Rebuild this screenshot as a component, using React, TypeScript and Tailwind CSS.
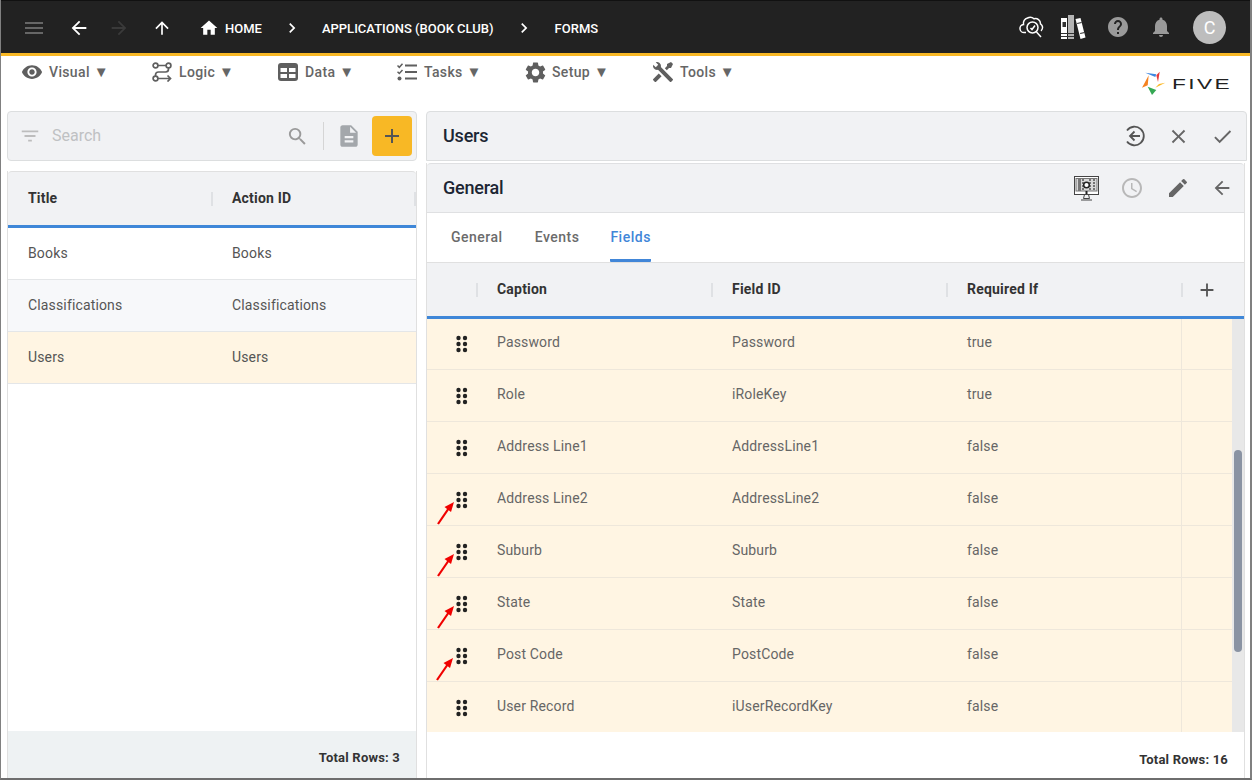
import React from "react";
import {
  MdMenu, MdArrowBack, MdArrowForward, MdArrowUpward, MdHome, MdChevronRight, MdHelp, MdNotifications,
  MdVisibility, MdSettings, MdFilterList, MdSearch, MdDescription, MdAdd, MdClose, MdCheck, MdEdit, MdAccessTime,
} from "react-icons/md";

const font = { fontFamily: "Roboto, sans-serif" };

function Arrow({ far }: { far?: boolean }) {
  return (
    <svg width="20" height="26" viewBox="0 0 20 26" className={"absolute top-[9px] " + (far ? "-left-[21px]" : "-left-[20px]")}>
      <line x1="2" y1="24" x2="13" y2="8" stroke="#f00000" strokeWidth="2.200" />
      <polygon points="18,2 8.500,7 15,12" fill="#f00000" />
    </svg>
  );
}

function Dots({ arrow, far }: { arrow?: boolean; far?: boolean }) {
  return (
    <span className="relative block w-[12px] h-[18px]">
      <svg width="12" height="18" viewBox="0 0 12 18" className="block">
        {[3, 9, 15].map((y) => (
          <g key={y}>
            <circle cx="2.5" cy={y} r="2.2" fill="#222" />
            <circle cx="9" cy={y} r="2.2" fill="#222" />
          </g>
        ))}
      </svg>
      {arrow && <Arrow far={far} />}
    </span>
  );
}

function LogicIcon() {
  return (
    <svg width="20" height="20" viewBox="0 0 20 20" fill="none" stroke="#5f5f5f" strokeWidth="1.7">
      <circle cx="3.5" cy="3.5" r="2.4" />
      <circle cx="16.5" cy="3.5" r="2.4" />
      <circle cx="3.5" cy="16.5" r="2.4" />
      <path d="M6 3.5h8M16.500 6v1q0 3-3 3H6.500q-3 0-3 3v1M6 16.500h12.500M15.500 13.500l3 3-3 3" />
    </svg>
  );
}

function DataIcon() {
  return (
    <svg width="20" height="18" viewBox="0 0 20 18">
      <rect x="0" y="0" width="20" height="18" rx="3" fill="#5f5f5f" />
      <rect x="2.500" y="5" width="6.500" height="4" fill="#fff" />
      <rect x="11" y="5" width="6.500" height="4" fill="#fff" />
      <rect x="2.500" y="11" width="6.500" height="4" fill="#fff" />
      <rect x="11" y="11" width="6.500" height="4" fill="#fff" />
    </svg>
  );
}

function TasksIcon() {
  return (
    <svg width="20" height="18" viewBox="0 0 20 18" fill="none" stroke="#5f5f5f">
      <path d="M0.500 2.500l1.800 1.800L5.500 0.800M0.500 8.700l1.800 1.800L5.500 7" strokeWidth="1.500" />
      <circle cx="2.500" cy="15.500" r="2" fill="#5f5f5f" stroke="none" />
      <path d="M8 2.500h12M8 9h12M8 15.500h12" strokeWidth="2.200" />
    </svg>
  );
}

function ToolsIcon() {
  return (
    <svg width="24" height="24" viewBox="0 0 24 24" fill="#5f5f5f">
      <path d="M21.71 20.29L20.29 21.71A1 1 0 0 1 18.88 21.71L7 9.85A3.81 3.81 0 0 1 6 10A4 4 0 0 1 2.22 4.7L4.76 7.24L5.29 6.71L6.71 5.29L7.24 4.76L4.7 2.22A4 4 0 0 1 10 6A3.81 3.81 0 0 1 9.85 7L21.71 18.88A1 1 0 0 1 21.71 20.29M2.29 18.88A1 1 0 0 0 2.29 20.29L3.71 21.71A1 1 0 0 0 5.12 21.71L10.59 16.25L7.76 13.42M20 2L16 4V6L13.83 8.17L15.83 10.17L18 8H20L22 4Z" />
    </svg>
  );
}

function CloudSearch() {
  return (
    <svg width="26" height="24" viewBox="0 0 26 24" fill="none" stroke="#fff" strokeWidth="1.500">
      <path d="M7 17.500H5.500a4 4 0 0 1-1-8 5.500 5.500 0 0 1 4-6.500 5.500 5.500 0 0 1 6.500 .8 5 5 0 0 1 6.500 5 4.300 4.300 0 0 1 .5 7" />
      <circle cx="13.500" cy="12.500" r="5.500" />
      <path d="M11.500 13l1.500 1.500 3-4M17.500 17l4.500 5" />
    </svg>
  );
}

function BooksIcon() {
  return (
    <svg width="26" height="26" viewBox="0 0 26 26" fill="#fff">
      <rect x="1" y="4" width="6" height="21" />
      <rect x="8" y="1" width="6" height="24" fill="#b4b4b4" />
      <path d="M15.500 5l5-1 5 19.500-5 1.500z" />
      <rect x="2.500" y="8" width="3.500" height="5" fill="#333" />
      <rect x="1" y="19" width="13" height="1" fill="#333" />
      <rect x="1" y="22" width="13" height="1" fill="#333" />
      <path d="M17 9l4.500-1 .3 1-4.500 1zM20 19l4.500-1 .3 1-4.500 1z" fill="#333" />
    </svg>
  );
}

function RevertIcon() {
  return (
    <svg width="22" height="22" viewBox="0 0 22 22" fill="none" stroke="#555" strokeWidth="1.800">
      <path d="M3 5.500A9.300 9.300 0 1 1 3 16.500" />
      <path d="M16 11H6.500M10.500 6.500L6 11l4.500 4.500" />
    </svg>
  );
}

function MonitorIcon() {
  return (
    <svg width="25" height="25" viewBox="0 0 25 25" fill="none" stroke="#444" strokeWidth="1">
      <rect x="0.500" y="0.500" width="24" height="18" fill="#fff" />
      <rect x="2" y="2.500" width="21" height="12.500" fill="#d8d8d8" stroke="#777" />
      <path d="M4 3h3v12H4z" fill="#777" stroke="none" />
      <path d="M9 3v12M16 3v12M20 3v12" stroke="#333" strokeWidth="1.200" strokeDasharray="2 1" />
      <circle cx="12.500" cy="9" r="2.800" fill="#fff" stroke="#222" strokeWidth="1.500" />
      <path d="M12.500 15v3" stroke="#222" strokeWidth="2" />
      <path d="M10.500 18.500l-1 4h6l-1-4M7 24h11" />
    </svg>
  );
}

function Logo() {
  return (
    <div className="flex items-center gap-[6px]">
      <svg width="24" height="25" viewBox="0 0 24 25" className="shrink-0">
        <polygon points="3.300,1.700 14.300,3.300 13.300,6" fill="#3f87e0" />
        <polygon points="17.700,0.700 14.300,4.300 16,11" fill="#e83a3a" />
        <polygon points="23.300,11.700 13.300,16.700 17,13" fill="#fbb726" />
        <polygon points="10,24 5.700,15.700 14.300,19" fill="#35a853" />
        <polygon points="6.700,4.300 0,16.700 5.700,14.300" fill="#f58220" />
      </svg>
      <span className="w-[58px] block text-[14px] leading-none tracking-[1.5px] text-[#222]" style={{ fontFamily: "'Liberation Sans', sans-serif", transform: "scaleX(1.62)", transformOrigin: "left" }}>FIVE</span>
    </div>
  );
}

const nav = [
  { label: "Visual", icon: <MdVisibility size={22} color="#5f5f5f" />, w: "w-[130px]" },
  { label: "Logic", icon: <LogicIcon />, w: "w-[126px]" },
  { label: "Data", icon: <DataIcon />, w: "w-[119px]" },
  { label: "Tasks", icon: <TasksIcon />, w: "w-[128px]" },
  { label: "Setup", icon: <MdSettings size={25} color="#5f5f5f" />, w: "w-[128px]" },
  { label: "Tools", icon: <ToolsIcon />, w: "w-[100px]" },
];

const fieldRows: [string, string, string, boolean][] = [
  ["Password", "Password", "true", false],
  ["Role", "iRoleKey", "true", false],
  ["Address Line1", "AddressLine1", "false", false],
  ["Address Line2", "AddressLine2", "false", true],
  ["Suburb", "Suburb", "false", true],
  ["State", "State", "false", true],
  ["Post Code", "PostCode", "false", true],
  ["User Record", "iUserRecordKey", "false", false],
];

function HeaderCell({ children, className = "pl-5" }: { children?: React.ReactNode; className?: string }) {
  return (
    <div className={"relative h-full flex items-center text-[14px] font-bold text-[#333] tracking-[0.2px] " + className}>
      <span className="absolute -left-px top-1/2 -translate-y-1/2 w-[2px] h-[14px] bg-[#dfe1e4]" />
      {children}
    </div>
  );
}

export default function App() {
  return (
    <div className="w-[1252px] h-[780px] flex flex-col overflow-hidden bg-white border-l border-l-[#808080] border-r-2 border-r-[#808080] border-b-2 border-b-[#6e6e6e]" style={font}>
      <header className="h-[53px] shrink-0 bg-[#222222] border-t border-t-[#111] pt-[2px] flex items-center text-white text-[13px] font-medium">
        <MdMenu size={24} color="#666" className="ml-[21px] shrink-0" />
        <MdArrowBack size={22} className="ml-[22px] shrink-0" />
        <MdArrowForward size={22} color="#3a3a3a" className="ml-[18px] shrink-0" />
        <MdArrowUpward size={20} className="ml-[22px] shrink-0" />
        <MdHome size={20} className="ml-[27px] shrink-0" />
        <span className="ml-[6px] pt-[2px]">HOME</span>
        <MdChevronRight size={20} className="ml-[20px] shrink-0" />
        <span className="ml-[20px] pt-[2px]">APPLICATIONS (BOOK CLUB)</span>
        <MdChevronRight size={20} className="ml-[20px] shrink-0" />
        <span className="ml-[21px] pt-[2px]">FORMS</span>
        <div className="ml-auto flex items-center mr-[24px] -mt-[2px]">
          <CloudSearch />
          <span className="ml-[15px]"><BooksIcon /></span>
          <MdHelp size={24} color="#9a9a9a" className="ml-[20px]" />
          <MdNotifications size={24} color="#9a9a9a" className="ml-[19px]" />
          <span className="ml-[20px] mt-[1px] w-[33px] h-[33px] rounded-full bg-[#bdbdbd] flex items-center justify-center text-[18px] font-normal">C</span>
        </div>
      </header>
      <div className="h-[3px] shrink-0 bg-[#f8b825]" />

      <div className="h-[55px] shrink-0 flex items-start pl-[21px]">
        {nav.map((n) => (
          <div key={n.label} className={"flex items-center gap-[7px] h-[32px] text-[14px] font-medium text-[#666] tracking-[0.35px] shrink-0 " + n.w}>
            <span className="w-[20px] flex justify-center [&>svg]:shrink-0">{n.icon}</span>
            <span>{n.label} <span className="text-[15px] leading-none">▼</span></span>
          </div>
        ))}
        <div className="ml-auto mr-[20px] mt-[15px]"><Logo /></div>
      </div>

      <div className="flex-1 min-h-0 flex pl-[6px] pr-[3px] gap-[9px]">
        <div className="w-[410px] shrink-0 flex flex-col gap-[10px]">
          <div className="h-[50px] shrink-0 bg-[#f1f2f4] border border-[#dcdedf] rounded-[4px] flex items-center pl-[11px] pr-[4px]">
            <MdFilterList size={22} color="#bdbdbd" />
            <span className="ml-[11px] text-[16px] text-[#bfc1c3]">Search</span>
            <MdSearch size={23} color="#9a9a9a" className="ml-auto" />
            <span className="ml-[14px] w-px h-[28px] bg-[#d5d5d5]" />
            <MdDescription size={26} color="#a3a7ab" className="ml-[12px]" />
            <span className="ml-[10px] w-[40px] h-[40px] rounded-[4px] bg-[#f8b825] flex items-center justify-center"><MdAdd size={24} color="#555" /></span>
          </div>
          <div className="flex-1 min-h-0 flex flex-col border-x border-[#e0e0e0]">
            <div className="h-[54px] shrink-0 bg-[#f1f2f4] grid grid-cols-[204px_204px] rounded-t-[4px] border-t border-[#e0e0e0]">
              <div className="h-full flex items-center pl-5 text-[14px] font-bold text-[#333] tracking-[0.2px]">Title</div>
              <div className="relative">
                <HeaderCell>Action ID</HeaderCell>
                <span className="absolute right-0 top-1/2 -translate-y-1/2 w-[2px] h-[14px] bg-[#dfe1e4]" />
              </div>
            </div>
            <div className="h-[3px] shrink-0 bg-[#3f87d8]" />
            {[["Books", "bg-white"], ["Classifications", "bg-[#f7f8fa]"], ["Users", "bg-[#fff5e3]"]].map(([t, bg]) => (
              <div key={t} className={"h-[52px] shrink-0 grid grid-cols-[204px_204px] items-center border-b border-[#e4e6e8] text-[14px] text-[#555] tracking-[0.15px] " + bg}>
                <span className="pl-5">{t}</span>
                <span className="pl-5">{t}</span>
              </div>
            ))}
            <div className="flex-1" />
            <div className="h-[47px] shrink-0 bg-[#eef2f3] flex items-center justify-end pr-4 pt-[6px] text-[13px] font-bold text-[#333] tracking-[0.2px]">Total Rows: 3</div>
          </div>
        </div>

        <div className="flex-1 min-w-0 flex flex-col gap-[2px]">
          <div className="h-[50px] shrink-0 bg-[#f1f2f4] border border-[#dcdedf] rounded-t-[4px] flex items-center pl-[16px] pr-[12px]">
            <span className="text-[18px] font-medium text-[#1c2633] mr-auto pb-[2px] tracking-[-0.2px]">Users</span>
            <RevertIcon />
            <MdClose size={23} color="#666" className="ml-[21px]" />
            <MdCheck size={23} color="#666" className="ml-[21px]" />
          </div>
          <div className="flex-1 min-h-0 flex flex-col border-x border-[#e0e0e0] mr-[2px]">
            <div className="h-[50px] shrink-0 bg-[#f1f2f4] border-t border-b border-[#dfe0e2] rounded-t-[4px] flex items-center pl-[16px] pr-[11px]">
              <span className="text-[18px] font-medium text-[#1c2633] mr-auto pb-[2px] tracking-[-0.2px]">General</span>
              <MonitorIcon />
              <MdAccessTime size={24} color="#b8b8b8" className="ml-[21px]" />
              <MdEdit size={24} color="#666" className="ml-[22px]" />
              <MdArrowBack size={22} color="#666" className="ml-[21px]" />
            </div>
            <div className="h-[50px] shrink-0 flex gap-8 pl-6 border-b border-[#e0e0e0] text-[14px] font-medium text-[#6b6b6b] tracking-[0.5px]">
              <span className="h-full flex items-center">General</span>
              <span className="h-full flex items-center">Events</span>
              <span className="h-full flex items-center -ml-px text-[#4186d8] border-b-[3px] border-[#4186d8] rounded-b-[1px] pt-[3px]">Fields</span>
            </div>
            <div className="h-[53px] shrink-0 bg-[#f1f2f4] grid grid-cols-[50px_235px_235px_235px_1fr]">
              <div />
              <HeaderCell>Caption</HeaderCell>
              <HeaderCell>Field ID</HeaderCell>
              <HeaderCell>Required If</HeaderCell>
              <HeaderCell><MdAdd size={22} color="#555" className="-ml-[6px]" /></HeaderCell>
            </div>
            <div className="h-[3px] shrink-0 bg-[#3f87d8]" />
            <div className="h-[413px] shrink-0 flex overflow-hidden">
              <div className="flex-1 min-w-0 -mt-[1px]">
                {fieldRows.map(([c, f, r, a]) => (
                  <div key={c} className="h-[52px] grid grid-cols-[50px_235px_235px_235px_1fr] items-center border-b border-[#eee7db] bg-[#fff5e3] text-[14px] text-[#666] tracking-[0.15px]">
                    <div className="pl-[29px]"><Dots arrow={a} far={c === "Post Code"} /></div>
                    <span className="pl-5 pb-[2px]">{c}</span>
                    <span className="pl-5 pb-[2px]">{f}</span>
                    <span className="pl-5 pb-[2px]">{r}</span>
                    <span className="h-full -ml-px border-l border-[#eee7db]" />
                  </div>
                ))}
              </div>
              <div className="w-[12px] shrink-0 bg-[#e8e8e8] px-[2px] pt-[131px]">
                <div className="h-[202px] rounded-full bg-[#8a93a3]" />
              </div>
            </div>
            <div className="flex-1 flex items-center justify-end pr-[16px] text-[13px] font-bold text-[#333] pt-[10px] tracking-[0.2px]">Total Rows: 16</div>
          </div>
        </div>
      </div>
    </div>
  );
}
